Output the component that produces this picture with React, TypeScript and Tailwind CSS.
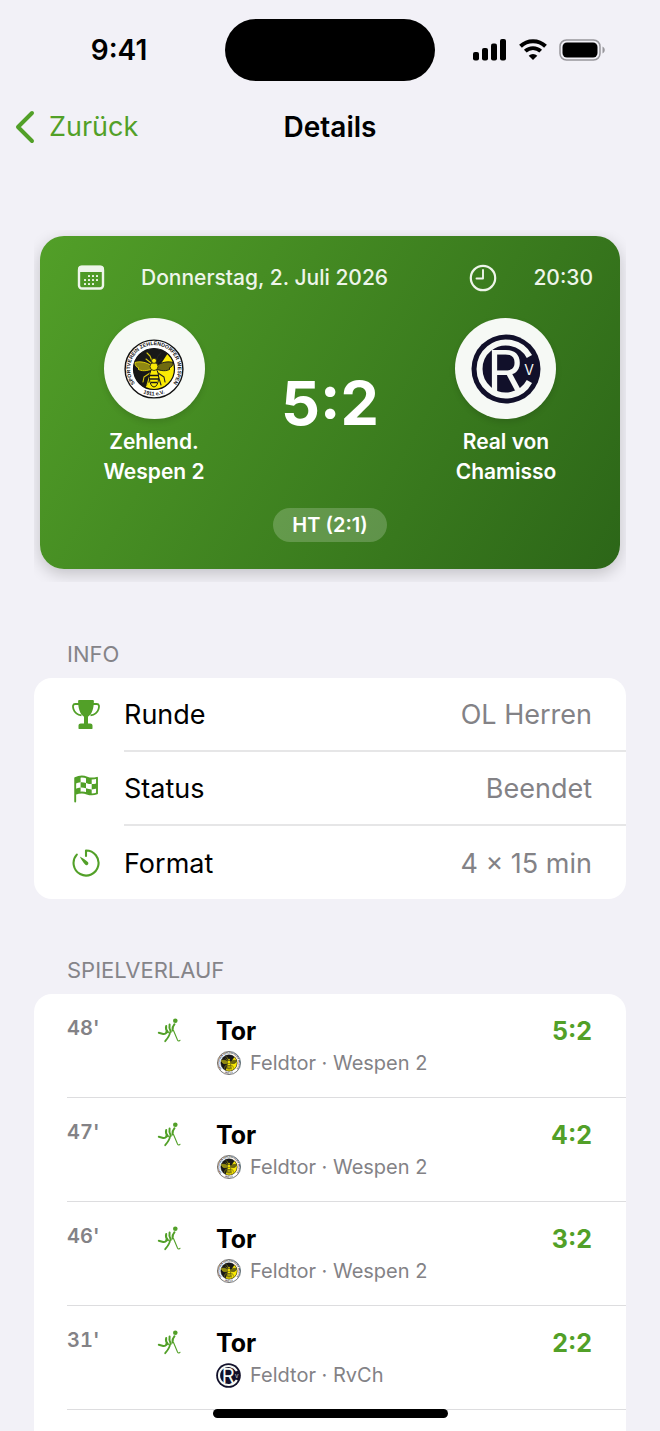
import React from 'react';

const INK = '#11102a';

function ChevronLeft() {
  return (
    <svg width="20" height="34" viewBox="0 0 20 34" fill="none" stroke="#52a028" strokeWidth="4" strokeLinecap="round" strokeLinejoin="round" aria-hidden="true">
      <path d="M17 3 3 17l14 14" />
    </svg>
  );
}

function SignalIcon() {
  return (
    <svg width="34" height="22" viewBox="0 0 34 22" aria-hidden="true">
      <rect x="0" y="13" width="6" height="8.500" rx="2" />
      <rect x="9" y="9" width="6" height="12.500" rx="2" />
      <rect x="18" y="4.500" width="6" height="17" rx="2" />
      <rect x="27" y="0" width="6" height="21.500" rx="2" />
    </svg>
  );
}

function WifiIcon() {
  return (
    <svg width="28" height="22" viewBox="0 0 28 22" fill="none" stroke="#000" aria-hidden="true">
      <path d="M1.500 7.200a18 18 0 0 1 25 0" strokeWidth="4" />
      <path d="M6.300 12.200a11.200 11.200 0 0 1 15.400 0" strokeWidth="3.900" />
      <path d="M14 21 9.700 16.700a6.300 6.300 0 0 1 8.600 0z" fill="#000" stroke="none" />
    </svg>
  );
}

function BatteryIcon() {
  return (
    <svg width="47" height="22" viewBox="0 0 47 22" aria-hidden="true">
      <rect x="1" y="1" width="40" height="20" rx="6.500" fill="none" stroke="#98979c" strokeWidth="1.500" />
      <rect x="3.500" y="3.500" width="35" height="15" rx="4.500" />
      <path d="M43.500 7.500c3 1.500 3 5.500 0 7z" fill="#98979c" />
    </svg>
  );
}

function CalendarIcon() {
  const dots = [
    [12, 11], [16, 11], [20, 11],
    [8, 15], [12, 15], [16, 15], [20, 15],
    [8, 19], [12, 19], [16, 19],
  ];
  return (
    <svg width="28" height="26" viewBox="0 0 28 26" aria-hidden="true">
      <rect x="2" y="2" width="24" height="21.500" rx="3" fill="none" stroke="#eef5ea" strokeWidth="2.400" />
      <path d="M1 7V4a3.500 3.500 0 0 1 3.500-3.500h19A3.500 3.500 0 0 1 27 4v3z" fill="#eef5ea" />
      {dots.map(([x, y]) => (
        <rect key={`${x}-${y}`} x={x - 1} y={y - 1} width="2" height="2" rx="0.500" fill="#eef5ea" />
      ))}
    </svg>
  );
}

function ClockIcon() {
  return (
    <svg width="28" height="28" viewBox="0 0 28 28" fill="none" stroke="#eef5ea" strokeWidth="2.200" strokeLinecap="round" aria-hidden="true">
      <circle cx="14" cy="14" r="12.200" />
      <path d="M14 6v8.500H7.500" strokeWidth="1.900" strokeLinejoin="round" />
    </svg>
  );
}

function TrophyIcon() {
  return (
    <svg width="28" height="30" viewBox="0 0 28 30" aria-hidden="true">
      <path d="M7 4H3.200C.8 4 .6 6.500 1.500 9.200c1.200 3.600 4 5.600 8 6.200M21 4h3.800c2.400 0 2.600 2.500 1.700 5.200-1.200 3.600-4 5.600-8 6.200" fill="none" stroke="#52a028" strokeWidth="1.800" />
      <path d="M7.500 0h13c.9 0 1.400.5 1.400 1.300-.1 6.700-1.700 13-5.900 15.400v6.800h2.300c1.200 0 2.200.9 2.200 2.100v2.600c0 .5-.4.900-.9.900H7.400c-.5 0-.9-.4-.9-.9v-2.600c0-1.200 1-2.100 2.200-2.100H12v-6.800C7.800 14.300 6.200 8 6.100 1.300 6.100.5 6.600 0 7.500 0z" fill="#52a028" />
    </svg>
  );
}

function FlagIcon() {
  return (
    <svg width="26" height="28" viewBox="0 0 26 28" aria-hidden="true">
      <path d="M2.200 26.500V3.200C7 .8 10.500 1.200 14 2.600c3.300 1.300 6.500 1.200 10 .2v15.600c-3.500 1.300-6.700 1.300-10 .1-3.500-1.400-7-1.600-11.800.5" fill="none" stroke="#52a028" strokeWidth="1.900" strokeLinecap="round" strokeLinejoin="round" />
      <g fill="#52a028">
        <path d="M2.200 3.200C4 2.200 5.800 1.700 7.600 1.600v5.600c-1.800.1-3.600.6-5.400 1.500z" />
        <path d="M13 2.200c1.900.8 3.800 1.200 5.700 1.300v5.600c-1.900 0-3.800-.4-5.700-1.200z" />
        <path d="M7.600 7.200c1.800-.1 3.600.1 5.400.7v5.400c-1.800-.6-3.600-.8-5.400-.7z" />
        <path d="M18.700 9.100c1.800 0 3.500-.2 5.300-.8v5.300c-1.800.5-3.500.8-5.300.8z" />
        <path d="M2.200 13.900c1.800-.8 3.600-1.200 5.400-1.300v5c-1.800.1-3.600.5-5.400 1.400z" />
        <path d="M13 13.300c1.900.7 3.800 1.100 5.700 1.100v5.100c-1.900 0-3.800-.5-5.700-1.300z" />
      </g>
    </svg>
  );
}

function TimerIcon() {
  return (
    <svg width="28" height="28" viewBox="0 0 28 28" fill="none" stroke="#52a028" strokeWidth="2.100" strokeLinecap="round" strokeLinejoin="round" aria-hidden="true">
      <path d="M14 7V1.500A12.500 12.500 0 1 1 4.800 5.600" />
      <path d="M7.800 7.400c2.800 1.500 5.800 3.400 8 5.500 1.700 1.900-.8 4.400-2.700 2.700-2-2.300-3.900-5.300-5.300-8.200z" fill="#52a028" stroke="none" />
    </svg>
  );
}

function HockeyPlayerIcon() {
  return (
    <svg width="25" height="25" viewBox="0 0 25 25" aria-hidden="true" fill="none" stroke="#52a028" strokeLinecap="round" strokeLinejoin="round">
      <circle cx="18.300" cy="2.700" r="2.300" fill="#52a028" stroke="none" />
      <path d="M9.200 8c-.8 2.500.2 4.500 1.800 6.200" strokeWidth="2" />
      <path d="M12.600 6.500c-.6 2.600-.2 5 1.200 7.300" strokeWidth="2" />
      <path d="M17.500 6.200c-1.600 1.800-2.200 4-2 6.300" strokeWidth="2" />
      <path d="M9.500 13.500c0 2.200-1.800 3-4.200 2.200l-3.500-.9" strokeWidth="2" />
      <path d="M13 14.500c-.3 3.200-2.200 5.600-4.800 8.700" strokeWidth="1.800" />
      <path d="m16.500 12.500 4 9.500c.6 1.300 2 1.300 2.500.2" strokeWidth="1.100" />
    </svg>
  );
}

function WespenLogo({ id, className }: { id: string; className: string }) {
  return (
    <svg className={className} viewBox="0 0 60 60" role="img" aria-label="Zehlendorfer Wespen">
      <defs>
        <path id={`${id}-top`} d="M14.300 48A23.900 23.900 0 1 1 45.700 48" />
        <path id={`${id}-bottom`} d="M13 50.300A26.500 26.500 0 0 0 47 50.300" />
        <clipPath id={`${id}-disc`}>
          <circle cx="30" cy="30" r="20.500" />
        </clipPath>
      </defs>
      <circle cx="30" cy="30" r="28.900" fill="#fff" stroke="#111" strokeWidth="1.400" />
      <g clipPath={`url(#${id}-disc)`}>
        <rect width="60" height="60" fill="#181818" />
        <path d="M46 11 19 52l8 8h33V11z" fill="#fbea05" />
      </g>
      <circle cx="30" cy="30" r="20.500" fill="none" stroke="#111" strokeWidth="1.200" />
      <text fill="#111" fontFamily="Liberation Sans, sans-serif" fontWeight="700" fontSize="5.200">
        <textPath href={`#${id}-top`} startOffset="50%" textAnchor="middle">SPORTVEREIN ZEHLENDORFER WESPEN</textPath>
      </text>
      <text fill="#111" fontFamily="Liberation Sans, sans-serif" fontWeight="700" fontSize="5.400">
        <textPath href={`#${id}-bottom`} startOffset="50%" textAnchor="middle">1911 e.V.</textPath>
      </text>
      <g strokeLinecap="round" strokeLinejoin="round" fill="none" strokeWidth="1.100">
        <path d="m28 22-2-5-3-3M27 24l-5-4M26 34l-6 4-1 5M26 36l-3 10" stroke="#d8ca0c" />
        <path d="m32 22 2-5 3-3M33 24l5-4M34 34l6 4 1 5M34 36l3 10" stroke="#222" />
      </g>
      <path d="M28 27c-6-4-12-5-17-3.500 0 3 1.500 5 4 5.500l-1 1c3 2.500 9 2 14 0z" fill="#8f8812" stroke="#e6d80a" strokeWidth="0.900" />
      <path d="M32 27c6-4 12-5 17-3.500 0 3-1.500 5-4 5.500l1 1c-3 2.500-9 2-14 0z" fill="#6f6a10" stroke="#161616" strokeWidth="0.900" />
      <ellipse cx="30" cy="38.500" rx="4.600" ry="9.500" fill="#fbea05" stroke="#181818" strokeWidth="1" />
      <path d="M26 36.500h8M26 40h8M27 43.500h6" stroke="#181818" strokeWidth="1.500" />
      <circle cx="30" cy="27.500" r="4" fill="#fbea05" stroke="#181818" strokeWidth="0.800" />
      <circle cx="30" cy="21.800" r="2.500" fill="#fbea05" stroke="#181818" strokeWidth="0.800" />
    </svg>
  );
}

function ChamissoLogo({ className }: { className: string }) {
  return (
    <svg className={className} viewBox="0 0 70 70" role="img" aria-label="Real von Chamisso" fontFamily="Inter, sans-serif" fill="#f6f9f5">
      <circle cx="35" cy="35" r="34.500" fill={INK} />
      <path d="M58.400 22.500a26.500 26.500 0 1 0 0 25" fill="none" stroke="#f6f9f5" strokeWidth="6" />
      <text x="16" y="57" fontSize="56" fontWeight="400">R</text>
      <text x="58" y="41" fontSize="14" fontWeight="400" textAnchor="middle">V</text>
    </svg>
  );
}

type Goal = { minute: string; score: string; team: string; wespen: boolean };

const goals: Goal[] = [
  { minute: "48'", score: '5:2', team: 'Wespen 2', wespen: true },
  { minute: "47'", score: '4:2', team: 'Wespen 2', wespen: true },
  { minute: "46'", score: '3:2', team: 'Wespen 2', wespen: true },
  { minute: "31'", score: '2:2', team: 'RvCh', wespen: false },
];

const info = [
  { label: 'Runde', value: 'OL Herren', icon: <TrophyIcon /> },
  { label: 'Status', value: 'Beendet', icon: <FlagIcon /> },
  { label: 'Format', value: '4 × 15 min', icon: <TimerIcon /> },
];

function Team({ first, second, children }: { first: string; second: string; children: React.ReactNode }) {
  return (
    <div className="flex w-40 flex-col items-center">
      <div className="flex size-[101px] items-center justify-center rounded-full bg-[#f6f9f5] shadow-[0_3px_6px_rgba(0,0,0,0.12)]">
        {children}
      </div>
      <p className="mt-2 text-center text-[21px] leading-[30px] font-semibold">
        {first}
        <br />
        {second}
      </p>
    </div>
  );
}

export default function App() {
  return (
    <div className="flex h-screen flex-col overflow-hidden bg-[#f2f1f7] font-['Inter',sans-serif] text-black">
      <header>
        <div className="grid h-[99px] grid-cols-[1fr_210px_1fr] items-center">
          <span className="pl-[13px] text-center text-[28px] leading-8 font-semibold">9:41</span>
          <div className="h-[62px] rounded-full bg-black" />
          <div className="flex items-center justify-center gap-3 pr-[17px]">
            <SignalIcon />
            <WifiIcon />
            <BatteryIcon />
          </div>
        </div>
        <nav className="grid h-14 grid-cols-[1fr_auto_1fr] items-center px-[15px]">
          <a href="#back" className="flex items-center gap-[14px] text-[27px] leading-8 text-[#52a028]">
            <ChevronLeft />
            Zurück
          </a>
          <h1 className="text-[28px] leading-8 font-semibold">Details</h1>
        </nav>
      </header>

      <main className="flex min-h-0 flex-1 flex-col px-[34px] pt-[75px]">
        <section className="shrink-0 overflow-hidden px-[6px] pt-[6px] pb-[13px]">
          <div className="flex flex-col rounded-[24px] bg-linear-[120deg,#529f28,#2c6618] pt-7 pb-[27px] text-white shadow-[0_5px_16px_rgba(0,0,0,0.2)]">
            <div className="flex h-7 items-center pr-[27px] pl-[37px] text-[21px] leading-7 font-medium text-[#eef5ea]">
              <CalendarIcon />
              <span className="ml-9">Donnerstag, 2. Juli 2026</span>
              <span className="ml-auto flex items-center gap-9">
                <ClockIcon />
                20:30
              </span>
            </div>
            <div className="mt-[26px] flex items-center justify-between px-[34px]">
              <Team first="Zehlend." second="Wespen 2">
                <WespenLogo id="home" className="size-[60px]" />
              </Team>
              <strong className="text-[61px] leading-[64px] font-bold">5:2</strong>
              <Team first="Real von" second="Chamisso">
                <ChamissoLogo className="size-[70px]" />
              </Team>
            </div>
            <span className="mt-[21px] self-center rounded-full bg-white/20 px-[19px] text-xl leading-[34px] font-semibold">HT (2:1)</span>
          </div>
        </section>

        <section className="mt-[60px] shrink-0">
          <h2 className="pl-[33px] text-[22px] leading-6 text-[#858489]">INFO</h2>
          <dl className="mt-[12px] rounded-[18px] bg-white">
            {info.map((row, i) => (
              <div key={row.label} className="flex items-center pl-[33px] text-[27px] leading-8">
                <span className="flex w-[37px] shrink-0 justify-center">{row.icon}</span>
                <div className={`ml-5 flex flex-1 items-center justify-between pt-[2px] pr-[34px] ${i < info.length - 1 ? 'h-[74px] border-b-2 border-[#e6e6e7]' : 'h-[73px]'}`}>
                  <dt>{row.label}</dt>
                  <dd className="text-[#838286]">{row.value}</dd>
                </div>
              </div>
            ))}
          </dl>
        </section>

        <section className="mt-[59px] flex flex-1 shrink-0 flex-col">
          <h2 className="pl-[33px] text-[22px] leading-6 text-[#858489]">SPIELVERLAUF</h2>
          <ul className="mt-[12px] flex-1 rounded-t-[18px] bg-white pl-[33px]">
            {goals.map((goal) => (
              <li key={goal.minute} className="flex h-[104px] items-start border-b border-[#dddddf] pt-[21px] pr-[34px]">
                <span className="mt-px w-[90px] text-xl leading-6 font-semibold text-[#838286] tabular-nums">{goal.minute}</span>
                <span className="mt-[3px] w-[59px]">
                  <HockeyPlayerIcon />
                </span>
                <div>
                  <h3 className="text-[25px] leading-8 font-bold">Tor</h3>
                  <p className="flex items-center gap-[9px] text-xl leading-8 text-[#838286]">
                    <span className="flex w-[25px] justify-center">
                      {goal.wespen ? <WespenLogo id={`goal-${goal.score[0]}`} className="size-6" /> : <ChamissoLogo className="size-[25px]" />}
                    </span>
                    Feldtor · {goal.team}
                  </p>
                </div>
                <strong className="ml-auto text-[25px] leading-8 font-bold text-[#52a028]">{goal.score}</strong>
              </li>
            ))}
          </ul>
        </section>
      </main>

      <div className="fixed inset-x-0 bottom-[13px] mx-auto h-[9px] w-[235px] rounded-full bg-black" />
    </div>
  );
}
